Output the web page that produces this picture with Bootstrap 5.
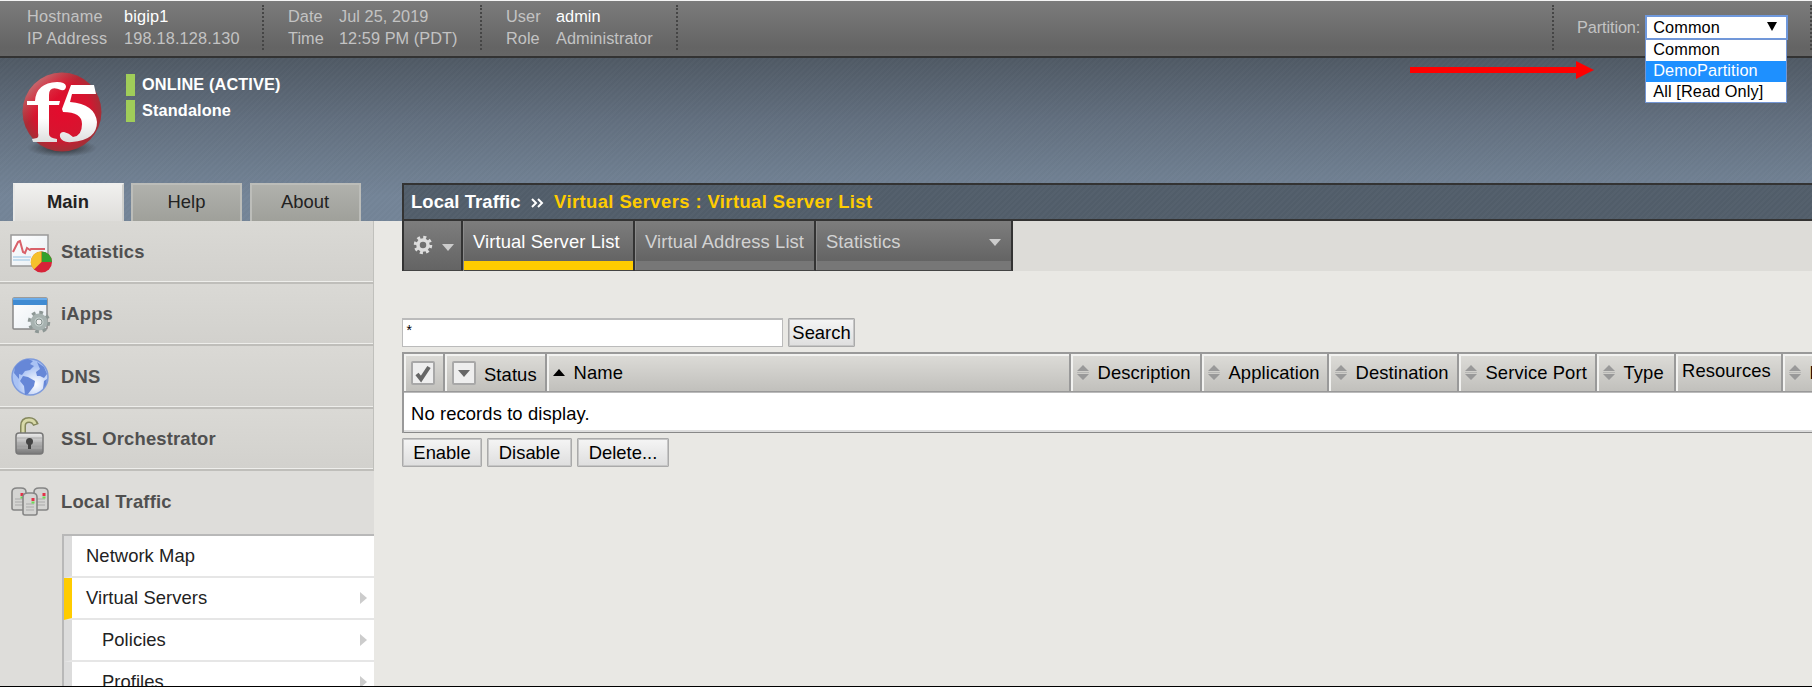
<!DOCTYPE html>
<html lang="en">
<head>
<meta charset="utf-8">
<title>BIG-IP - Virtual Server List</title>
<link rel="stylesheet" href="https://cdn.jsdelivr.net/npm/bootstrap@5.3.0/dist/css/bootstrap.min.css">
<script src="https://cdn.jsdelivr.net/npm/bootstrap@5.3.0/dist/js/bootstrap.bundle.min.js"></script>
<style>
body{font-family:"Liberation Sans",Arial,sans-serif;font-size:18.4px;line-height:22px;color:#000;background:#e9e8e4;height:687px;overflow:hidden}
.page{height:687px;border-top:1px solid #f4f4f4;border-bottom:1px solid #000}
.infobar{height:57px;flex:none;background:linear-gradient(#7b7b7b,#646464 85%,#666);border-bottom:2px solid #333;font-size:16.3px;color:#c3c3c3;padding-top:4px;position:relative;z-index:3;letter-spacing:.06px}
.infobar strong{font-weight:400;color:#fff}
.info{height:45px;border-right:2px dotted #454545;display:grid;white-space:nowrap;align-content:start}
.info.host{width:264px;padding-left:27px;grid-template-columns:97px 1fr;letter-spacing:.18px}
.info.date{width:218px;padding-left:24px;grid-template-columns:51px 1fr}
.info.user{width:196px;padding-left:24px;grid-template-columns:50px 1fr}
.part{width:260px;height:45px;border-left:2px dotted #454545;border-right:2px dotted #454545;padding:10px 0 0 23px;letter-spacing:-.1px}
.picker{position:relative;width:143px;height:25px;margin:0 0 0 5px;color:#000;letter-spacing:.1px}
.sel{height:25px;border:2px solid #6f98dc;background:#fff;padding:0 9px 2px 6px;line-height:20px}
.opts{position:absolute;top:24px;left:0;width:142px;border:1px solid #7396d4;background:#fff;z-index:5;height:64px}
.opts div{height:21px;line-height:18px;padding-left:7px;white-space:nowrap}
.opts .hot{background:#1e90ff;color:#fff}
.redarrow{position:absolute;left:-235px;top:45px}
.banner{height:163px;flex:none;position:relative;background:repeating-linear-gradient(135deg,rgba(255,255,255,.012) 0 2px,rgba(0,0,0,.012) 2px 4px),linear-gradient(#505a65,#637080 40%,#748598 85%,#748598)}
.side-top{width:402px}
.logo{margin:14px 0 0 20px}
.state{margin:16px 0 0 22px;font-size:16.3px;font-weight:700;color:#fff;letter-spacing:.13px}
.state div{height:22px;border-left:9px solid #a0cd59;padding-left:7px;margin-bottom:4px;line-height:20px;white-space:nowrap}
.toptabs{padding-left:12.5px;gap:7.5px;height:38px}
.toptabs a{width:111px;height:38px;color:#222;text-decoration:none;text-align:center;border:2px solid #bcbdb9;border-bottom:0;background:linear-gradient(#b0b1ac,#9fa09a);line-height:34px}
.toptabs a.on{background:linear-gradient(#f0f0ee,#dedddA);border-color:#f0f0ee #cfcfcc transparent #e8e8e6;font-weight:700;color:#222}
.crumb{border:2px solid #333;border-right:0;height:38px;background:repeating-linear-gradient(135deg,rgba(255,255,255,.015) 0 2px,rgba(0,0,0,.015) 2px 4px),#525e6b;color:#fff;font-weight:700;line-height:34px;padding-left:7px;letter-spacing:.1px;white-space:nowrap;margin-top:125px}
.crumb svg{margin:0 5px}
.crumb span{color:#fc0;letter-spacing:.42px}
.sidebar{width:374px;flex:none;background:#dedddA}
.mod{height:62.5px;display:flex;align-items:center;padding:1px 0 0 8px;font-weight:700;color:#505050;letter-spacing:.18px;background:linear-gradient(#dad9d5,#d2d1cd);border-bottom:2px solid #bfbeba;border-right:1px solid #c0c0bc;box-shadow:inset 0 -1px #eeeeeb}
.mod svg{width:44px;height:44px;margin-right:9px;flex:none}
.mod.open{background:none;border-color:transparent;box-shadow:none}
.submenu{margin-left:62px;border-left:2px solid #b8b8b8;border-top:2px solid #b8b8b8;color:#222}
.submenu div{height:42.1px;background:#fff;border-left:8px solid #dcdcdc;border-bottom:2px solid #e6e6e6;display:flex;align-items:center;justify-content:space-between;padding:0 7px 0 14px;letter-spacing:.06px}
.submenu .cur{border-left-color:#fc0}
.submenu .in{padding-left:30px}
.submenu div:after{content:"";border:6px solid transparent;border-left:7px solid #ccc;border-right:0}
.submenu div:first-child:after{display:none}
.content{padding-left:28px;min-width:0}
.tabs{height:50px;background:#dddcd8}
.tabs>div{height:50px;border-right:2px solid #333;border-bottom:1px solid #444;background:linear-gradient(#7d7d7d,#646464 40px,#777 40px);color:#d2d2d2;padding:10px 0 0 10px;white-space:nowrap;box-shadow:inset 1px 0 #8a8a8a;letter-spacing:.1px}
.tabs>.gear{width:61px;border-left:2px solid #333;background:linear-gradient(#7d7d7d,#646464);padding:14px 0 0 9px;box-shadow:none;display:flex}
.tabs>.act{color:#fff;border-bottom:0;background:linear-gradient(#7d7d7d,#646464 40px,#fc0 40px,#fc0 49px,#444 49px)}
.gear .tri{margin:9px 0 0 9px}
.tri{width:0;height:0;border:6px solid transparent;border-top:7px solid #ccc;border-bottom:0}
.box{width:381px;height:29px;background:#fff;border:2px solid #bbb;border-width:2px 1px 1px;padding:1px 2px;font-family:"Liberation Mono",monospace;font-size:14px}
.gbtn{height:29px;border:1px solid #aaa;box-shadow:inset 0 0 0 1px #c6c6c6;border-radius:1px;background:linear-gradient(#f5f5f5,#dedede);padding:0;color:#000;font:inherit;text-align:center}
.grid{table-layout:fixed;width:1440px;border-collapse:separate;border-spacing:0;border:2px solid #999;border-bottom:0;margin-top:5px;letter-spacing:.1px}
.grid th{height:38px;font-weight:400;padding:1px 0 0 6px;border-right:2px solid #999;border-bottom:1px solid #999;background:linear-gradient(#dddcd8,#c1c0bc);box-shadow:inset 2px 2px #f2f2f0;white-space:nowrap;vertical-align:middle}
.grid td{height:41px;background:#fff;padding:2px 0 0 7px;border-top:1px solid #bbb;border-bottom:1px solid #888;box-shadow:inset 0 -2px #ddd}
.grid svg{vertical-align:-1px}
.grid .me-2{margin-right:8.5px!important}
.ck{display:inline-block;width:24px;height:24px;border:2px solid #a8a8a8;border-radius:2px;background:#eee;vertical-align:-4px;margin:0 8px 0 1px}
.ck svg{display:block}
</style>
</head>
<body>
<svg width="0" height="0" class="position-absolute"><defs>
<g id="sorter"><path d="M6 0l6 6H0zM6 15l6-6H0z" fill="#999"/><path d="M0 7.5h12" stroke="#b5b5b3"/></g>
<linearGradient id="metal" x2="0" y2="1"><stop stop-color="#eee"/><stop offset=".5" stop-color="#b0b0b0"/><stop offset="1" stop-color="#777"/></linearGradient>
<linearGradient id="paper" x2="1" y2="1"><stop stop-color="#fff"/><stop offset="1" stop-color="#e7edf2"/></linearGradient>
<g id="server"><path d="M1 5Q1 1 6 1h4q5 0 5 4v16q0 2-2 2H3q-2 0-2-2z" fill="#d4d4d2" stroke="#858585" stroke-width="1.6"/><path d="M4 12h8M4 15h8M4 18h8" stroke="#aaa"/><rect x="9.500" y="6" width="3" height="3" fill="#e33249"/><rect x="9.500" y="9.500" width="3" height="2" fill="#70d957"/></g>
</defs></svg>
<div class="page d-flex flex-column overflow-hidden">
<header class="infobar d-flex">
  <div class="info host"><span>Hostname</span><strong>bigip1</strong><span>IP Address</span><span>198.18.128.130</span></div>
  <div class="info date"><span>Date</span><span>Jul 25, 2019</span><span>Time</span><span>12:59 PM (PDT)</span></div>
  <div class="info user"><span>User</span><strong>admin</strong><span>Role</span><span>Administrator</span></div>
  <div class="part d-flex ms-auto"><span class="pt-1" style="line-height:16px">Partition:</span>
    <div class="picker"><div class="sel d-flex justify-content-between align-items-center"><span>Common</span><svg width="10" height="10"><path d="M0 0h10L5 9z"/></svg></div>
      <div class="opts"><div>Common</div><div class="hot">DemoPartition</div><div>All [Read Only]</div></div>
      <svg class="redarrow" width="186" height="20"><path d="M0 7h166V1l18 9-18 9v-6H0z" fill="#f00"/></svg>
    </div>
  </div>
</header>
<section class="banner d-flex">
  <div class="side-top d-flex flex-column justify-content-between">
    <div class="d-flex">
      <svg class="logo" width="84" height="86" viewBox="0 0 84 86">
        <defs><radialGradient id="ball" cx=".5" cy=".48" r=".53"><stop stop-color="#e40b2d"/><stop offset=".66" stop-color="#d6152f"/><stop offset="1" stop-color="#9c3338"/></radialGradient>
        <linearGradient id="shine" x2=".7" y2=".8"><stop stop-color="#ddd" stop-opacity=".75"/><stop offset=".5" stop-color="#e66" stop-opacity="0"/></linearGradient>
        <linearGradient id="ink" x2="0" y2="1"><stop offset=".6" stop-color="#fff"/><stop offset="1" stop-color="#dedede"/></linearGradient>
        <radialGradient id="shade"><stop stop-color="#111" stop-opacity=".8"/><stop offset="1" stop-color="#222" stop-opacity="0"/></radialGradient></defs>
        <ellipse cx="42" cy="76" rx="35" ry="9" fill="url(#shade)"/>
        <circle cx="42" cy="40" r="39.500" fill="url(#ball)"/><circle cx="42" cy="40" r="39.500" fill="url(#shine)"/>
        <path d="M7 29h8Q16 11 37 10q8 0 9 4 0 5-5 4-12-5-12 5v6h11l-1 4H29v29q0 4 8 5v3H13l-1-3 5-1q2-1 1-5V33H7zM51 13h23l2 9H52l-2 8q25 2 27 20 0 18-25 20-10 1-12-5-1-5 4-5 5 1 9 5 9-1 9-13 0-12-19-12l-1-3z" fill="url(#ink)"/>
      </svg>
      <div class="state"><div>ONLINE (ACTIVE)</div><div>Standalone</div></div>
    </div>
    <nav class="toptabs d-flex"><a href="#" class="on">Main</a><a href="#">Help</a><a href="#">About</a></nav>
  </div>
  <div class="crumb flex-grow-1">Local Traffic <svg width="13" height="10" viewBox="0 0 13 10"><path d="M1 1l4 4-4 4M7 1l4 4-4 4" fill="none" stroke="#fff" stroke-width="2"/></svg> <span>Virtual Servers : Virtual Server List</span></div>
</section>
<div class="d-flex flex-grow-1">
<aside class="sidebar">
  <div class="mod"><svg viewBox="0 0 44 44"><rect x="3" y="5" width="37" height="31" fill="url(#paper)" stroke="#999" stroke-width="1.500"/><path d="M5 27h18M5 30h17" stroke="#c4dced" stroke-width="2"/><path d="M5 22l5-10 2-1 3 11 2 1 2-5 3 2 1-1h14" fill="none" stroke="#d9616a" stroke-width="2"/><circle cx="33.500" cy="32" r="10.500" fill="#d72338"/><path d="M33.500 32V21.500A10.500 10.500 0 0 1 44 32z" fill="#31a12d"/><path d="M33.500 32V21.500a10.500 10.500 0 0 0-7.500 18z" fill="#f5c02b"/></svg>Statistics</div>
  <div class="mod"><svg viewBox="0 0 44 44"><rect x="5" y="6" width="34" height="31" rx="1" fill="url(#paper)" stroke="#888" stroke-width="1.500"/><path d="M5 6h34v7H5z" fill="#408bd2"/><path d="M5 7h34" stroke="#6bacea" stroke-width="2"/><g transform="translate(31 30)"><circle r="9.500" fill="none" stroke="#8d9795" stroke-width="3.500" stroke-dasharray="3.700 3.760"/><circle r="6.500" fill="#c5cfcd" stroke="#a7b2b0" stroke-width="4"/><circle r="3" fill="#eee" stroke="#84908d"/></g></svg>iApps</div>
  <div class="mod"><svg viewBox="0 0 44 44"><defs><radialGradient id="sea" cx=".65" cy=".7"><stop stop-color="#fff"/><stop offset="1" stop-color="#a9c2f4"/></radialGradient></defs><circle cx="22" cy="22" r="18" fill="url(#sea)" stroke="#7e9bdc" stroke-width="1.500"/><path d="M7 12q5-7 13-8l5 2-3 3 4 2-4 4-5 1-3 4-3-1v5L6 18zM15 21l5 1 7 4-1 5-6 8-3 1-1-9-4-5zM29 7l7 5 3 7-3 4-4-2-3 0-1-4 4-3zM36 26l3-2-1 6-3 4z" fill="#6687d7"/></svg>DNS</div>
  <div class="mod"><svg viewBox="0 0 44 44"><path d="M15 18V9q0-6 6-6 5 0 7 5" fill="none" stroke="#84875c" stroke-width="6"/><path d="M15 18V9q0-6 6-6 5 0 6 4" fill="none" stroke="#d8d9a8" stroke-width="3"/><rect x="8" y="16" width="27" height="21" rx="3" fill="url(#metal)" stroke="#777" stroke-width="1.500"/><path d="M9 21h25M9 26h25M9 31h25" stroke="#aaa"/><circle cx="21.500" cy="24.500" r="3.500" fill="#444"/><path d="M20 25h3v7h-3z" fill="#444"/></svg>SSL Orchestrator</div>
  <div class="mod open"><svg viewBox="0 0 44 44"><use href="#server" x="3" y="7"/><use href="#server" x="25" y="7"/><use href="#server" x="14" y="12"/></svg>Local Traffic</div>
  <div class="submenu"><div>Network Map</div><div class="cur">Virtual Servers</div><div class="in">Policies</div><div class="in">Profiles</div></div>
</aside>
<main class="content flex-grow-1 overflow-hidden">
  <div class="tabs d-flex">
    <div class="gear"><svg width="20" height="20" viewBox="-10 -10 20 20"><circle r="7.500" fill="none" stroke="#ddd" stroke-width="3.500" stroke-dasharray="2.950 2.940"/><circle r="5" fill="none" stroke="#ddd" stroke-width="3.500"/></svg><span class="tri"></span></div>
    <div class="act" style="width:172px">Virtual Server List</div>
    <div style="width:181px">Virtual Address List</div>
    <div class="d-flex justify-content-between" style="width:197px">Statistics<span class="tri mt-2" style="margin-right:10px"></span></div>
  </div>
  <div class="d-flex" style="margin-top:47px;gap:5px"><div class="box">*</div><button class="gbtn" style="width:67px">Search</button></div>
  <table class="grid">
    <colgroup><col style="width:41px"><col style="width:102px"><col style="width:524px"><col style="width:131px"><col style="width:127px"><col style="width:130px"><col style="width:138px"><col style="width:79px"><col style="width:107px"><col></colgroup>
    <thead><tr>
      <th><span class="ck"><svg width="20" height="20"><path d="M4 11l4 5 8-12" fill="none" stroke="#666" stroke-width="4"/></svg></span></th>
      <th><span class="ck"><svg width="20" height="20"><path d="M4 7h12l-6 7z" fill="#666"/></svg></span>Status</th>
      <th><svg width="12" height="11" class="me-2"><path d="M6 0l6 7H0z"/></svg>Name</th>
      <th><svg width="12" height="15" class="me-2"><use href="#sorter"/></svg>Description</th>
      <th><svg width="12" height="15" class="me-2"><use href="#sorter"/></svg>Application</th>
      <th><svg width="12" height="15" class="me-2"><use href="#sorter"/></svg>Destination</th>
      <th><svg width="12" height="15" class="me-2"><use href="#sorter"/></svg>Service Port</th>
      <th><svg width="12" height="15" class="me-2"><use href="#sorter"/></svg>Type</th>
      <th class="pb-1">Resources</th>
      <th><svg width="12" height="15" class="me-2"><use href="#sorter"/></svg>Partition / Path</th>
    </tr></thead>
    <tbody><tr><td colspan="10">No records to display.</td></tr></tbody>
  </table>
  <div class="d-flex" style="margin-top:5px;gap:5px"><button class="gbtn" style="width:80px">Enable</button><button class="gbtn" style="width:85px">Disable</button><button class="gbtn" style="width:92px">Delete...</button></div>
</main>
</div>
</div>
</body>
</html>
